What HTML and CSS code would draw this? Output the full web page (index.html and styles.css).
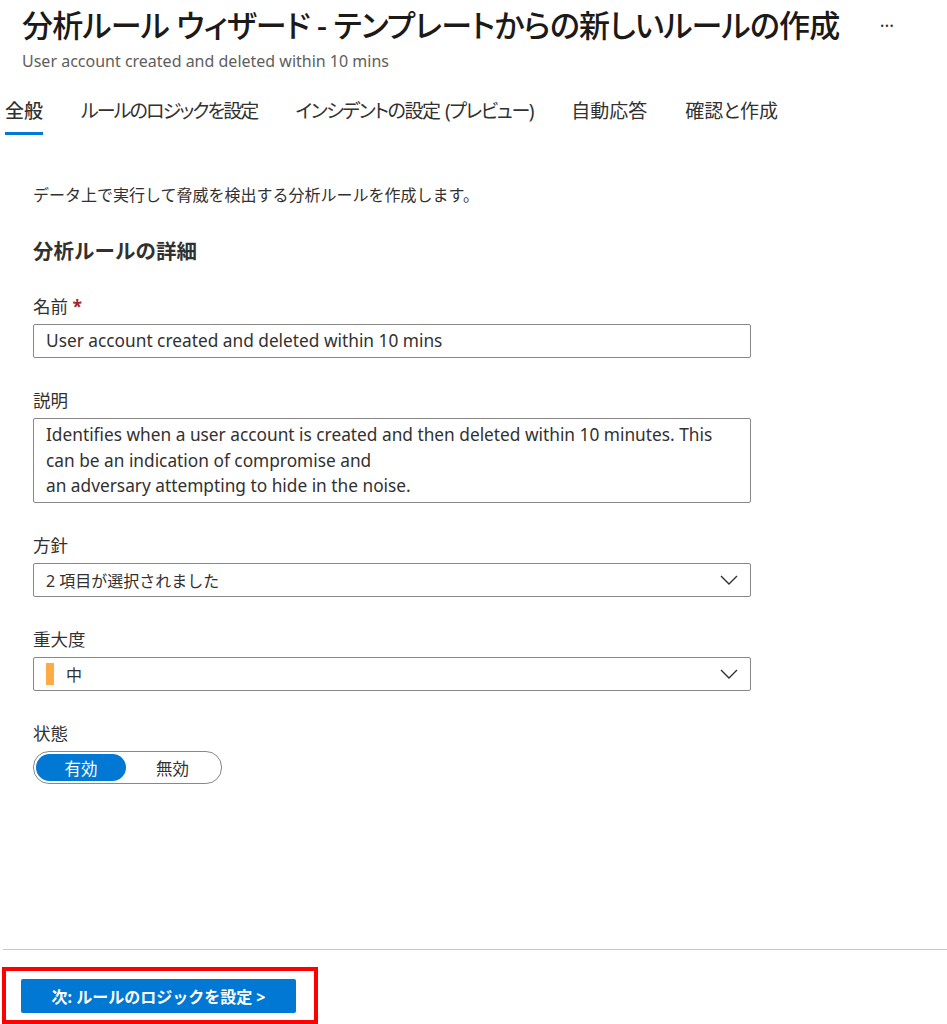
FILE: index.html
```html
<!DOCTYPE html>
<html lang="ja">
<head>
<meta charset="utf-8">
<title>分析ルール ウィザード</title>
<link rel="stylesheet" href="styles.css">
</head>
<body>
<div class="page">
  <header class="header">
    <div class="title-row">
      <h1 class="title">分析ルール ウィザード - テンプレートからの新しいルールの作成</h1>
      <span class="more">···</span>
    </div>
    <div class="subtitle">User account created and deleted within 10 mins</div>
  </header>

  <nav class="tabs">
    <span class="tab active">全般</span>
    <span class="tab kana">ルールのロジックを設定</span>
    <span class="tab kana2">インシデントの設定 (プレビュー)</span>
    <span class="tab">自動応答</span>
    <span class="tab">確認と作成</span>
  </nav>

  <main class="content">
    <p class="desc">データ上で実行して脅威を検出する分析ルールを作成します。</p>
    <h2 class="section">分析ルールの詳細</h2>

    <div class="field">
      <label class="label">名前 <span class="req">*</span></label>
      <div class="input">User account created and deleted within 10 mins</div>
    </div>

    <div class="field">
      <label class="label">説明</label>
      <div class="textarea">Identifies when a user account is created and then deleted within 10 minutes. This<br>can be an indication of compromise and<br>an adversary attempting to hide in the noise.</div>
    </div>

    <div class="field">
      <label class="label">方針</label>
      <div class="select">
        <span class="select-text">2 項目が選択されました</span>
        <svg class="chev" width="18" height="10" viewBox="0 0 18 10"><polyline points="1,1 9,9 17,1" fill="none" stroke="#323130" stroke-width="1.4"/></svg>
      </div>
    </div>

    <div class="field">
      <label class="label">重大度</label>
      <div class="select">
        <span class="sev-bar"></span>
        <span class="select-text">中</span>
        <svg class="chev" width="18" height="10" viewBox="0 0 18 10"><polyline points="1,1 9,9 17,1" fill="none" stroke="#323130" stroke-width="1.4"/></svg>
      </div>
    </div>

    <div class="field">
      <label class="label">状態</label>
      <div class="toggle">
        <span class="opt on">有効</span>
        <span class="opt">無効</span>
      </div>
    </div>
  </main>

  <footer class="footer">
    <div class="highlight">
      <button class="primary">次: ルールのロジックを設定 &gt;</button>
    </div>
  </footer>
</div>
</body>
</html>
```

FILE: styles.css
```css
* { box-sizing: border-box; }
html, body { margin: 0; padding: 0; background: #fff; }
body {
  font-family: "Noto Sans", "Noto Sans CJK JP", sans-serif;
  color: #323130;
  height: 1024px;
  overflow: hidden;
}
.page {
  display: flex;
  flex-direction: column;
  height: 1024px;
}
.header { padding-left: 22px; }
.title-row {
  display: flex;
  align-items: center;
  padding-top: 4px;
}
.title {
  margin: 0;
  font-size: 31px;
  line-height: 42px;
  font-weight: 500;
  color: #1b1a19;
  font-feature-settings: "palt";
  letter-spacing: -0.7px;
}
.more {
  margin-left: 40px;
  font-size: 18px;
  color: #323130;
}
.subtitle {
  margin-top: 5px;
  font-size: 16px;
  line-height: 20px;
  color: #605e5c;
}
.tabs {
  display: flex;
  gap: 38px;
  margin-top: 27px;
  padding-left: 5px;
}
.tab {
  font-size: 19px;
  line-height: 26px;
  padding-bottom: 8px;
  border-bottom: 3px solid transparent;
  color: #323130;
  font-feature-settings: "palt";
}
.tab.kana { letter-spacing: -1.9px; }
.tab.kana2 { letter-spacing: -1.4px; word-spacing: 2px; }
.tab.active {
  border-bottom-color: #0078d4;
  font-weight: 500;
}
.content {
  padding-left: 33px;
  width: 751px;
}
.desc {
  margin: 49px 0 0;
  font-size: 16px;
  line-height: 22px;
}
.section {
  margin: 31px 0 0;
  font-size: 20.5px;
  line-height: 28px;
  font-weight: 700;
}
.field { margin-top: 30px; }
.field + .field { margin-top: 31px; }
.label {
  display: block;
  font-size: 17.5px;
  line-height: 22px;
  margin-bottom: 7px;
}
.req { color: #a4262c; font-weight: 700; }
.input, .select, .textarea {
  border: 1px solid #8a8886;
  border-radius: 2px;
  color: #323130;
}
.input {
  height: 34px;
  line-height: 32px;
  padding-left: 12px;
  font-size: 17.3px;
}
.textarea {
  height: 85px;
  padding: 3px 12px;
  line-height: 25.5px;
  font-size: 17.3px;
}
.select {
  height: 34px;
  display: flex;
  align-items: center;
  padding-left: 12px;
  padding-right: 12px;
  font-size: 16px;
}
.select-text { flex: 1; }
.sev-bar {
  width: 8px;
  height: 22px;
  background: #ffaa44;
  margin-right: 12px;
}
.toggle {
  display: inline-flex;
  width: 189px;
  height: 33px;
  border: 1px solid #8a8886;
  border-radius: 16px;
  padding: 2px;
}
.opt {
  flex: 1;
  display: flex;
  align-items: center;
  justify-content: center;
  border-radius: 14px;
  font-size: 16.5px;
  color: #323130;
}
.opt.on {
  flex: 0 0 90px;
  background: #0078d4;
  color: #fff;
}
.footer {
  margin-top: auto;
  margin-left: 3px;
  border-top: 1px solid #c8c6c4;
  padding-top: 17px;
  height: 75px;
}
.highlight {
  display: inline-block;
  margin-left: -1px;
  border: 4px solid #ff0000;
  padding: 8px 18px 7px 15px;
}
.primary {
  display: block;
  width: 275px;
  height: 34px;
  background: #0078d4;
  color: #fff;
  border: none;
  border-radius: 2px;
  font-family: inherit;
  font-size: 16px;
  font-weight: 700;
}
```
